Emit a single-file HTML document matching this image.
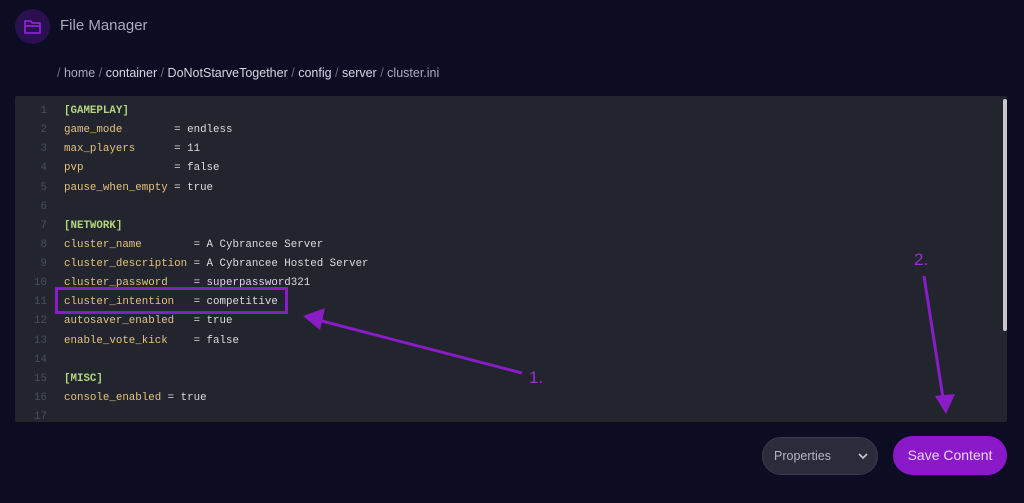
<!DOCTYPE html>
<html><head><style>
body{margin:0;width:1024px;height:503px;background:#0c0c22;font-family:"Liberation Sans",sans-serif;overflow:hidden;position:relative}
.ic{position:absolute;left:15px;top:9px;width:35px;height:35px;border-radius:50%;background:#2a1050}
.title{position:absolute;left:60px;top:17px;font-size:15px;color:#a8a8c2}
.bc{position:absolute;left:57px;top:66px;font-size:12.5px;color:#d6d6e2}
.bc .s{color:#6c6c85}.bc .l{color:#a8a8c0}
.ed{position:absolute;left:15px;top:96px;width:992px;height:326px;background:#22252d;border-radius:2px;overflow:hidden}
.code{position:absolute;top:0;left:0;font-family:"Liberation Mono",monospace;font-size:10.8px;line-height:19.13px;padding-top:3px}
.ln{position:absolute;left:0;width:32px;text-align:right;color:#4a4e59}
.tx{position:absolute;left:49px;white-space:pre;color:#dcdce0}
.k{color:#e6c27e}.g{color:#b5d67e;font-weight:bold}
.sb{position:absolute;left:988px;top:3px;width:4px;height:232px;background:#c8c8cc;border-radius:2px}
.prop{position:absolute;left:762px;top:437px;width:116px;height:38px;border-radius:19px;background:#2b2b3c;border:1px solid #3a3a4e;box-sizing:border-box;color:#b4b4c4;font-size:12.5px;line-height:36px;padding-left:11px}
.save{position:absolute;left:893px;top:436px;width:114px;height:39px;border-radius:20px;background:#8c19c9;color:#e9d7f5;font-size:14px;line-height:39px;text-align:center}
.lab{position:absolute;color:#9b2fd6;font-size:17px}
</style></head><body>
<div class="ic"><svg width="35" height="35" viewBox="0 0 35 35"><path d="M10 12h5.5l2 2h7.5v10H10z" fill="none" stroke="#8a22d0" stroke-width="1.8" stroke-linejoin="round"/><path d="M10 17h15" stroke="#8a22d0" stroke-width="1.8"/></svg></div>
<div class="title">File Manager</div>
<div class="bc"><span class="s">/</span> <span class="l">home</span> <span class="s">/</span> container <span class="s">/</span> DoNotStarveTogether <span class="s">/</span> config <span class="s">/</span> server <span class="s">/</span> <span class="l">cluster.ini</span></div>
<div class="ed">
<div class="code">
<div style="position:relative;height:330px">
<div class="ln" style="top:3px">1<br>2<br>3<br>4<br>5<br>6<br>7<br>8<br>9<br>10<br>11<br>12<br>13<br>14<br>15<br>16<br>17</div>
<div class="tx" style="top:3px"><span class="g">[GAMEPLAY]</span>
<span class="k">game_mode</span>        = endless
<span class="k">max_players</span>      = 11
<span class="k">pvp</span>              = false
<span class="k">pause_when_empty</span> = true

<span class="g">[NETWORK]</span>
<span class="k">cluster_name</span>        = A Cybrancee Server
<span class="k">cluster_description</span> = A Cybrancee Hosted Server
<span class="k">cluster_password</span>    = superpassword321
<span class="k">cluster_intention</span>   = competitive
<span class="k">autosaver_enabled</span>   = true
<span class="k">enable_vote_kick</span>    = false

<span class="g">[MISC]</span>
<span class="k">console_enabled</span> = true
</div></div></div>
<div class="sb"></div>
</div>
<svg style="position:absolute;left:0;top:0" width="1024" height="503">
<rect x="56.5" y="288.5" width="230" height="24" fill="none" stroke="#8a1cc8" stroke-width="3"/>
<line x1="522" y1="373" x2="318" y2="320" stroke="#8a1cc8" stroke-width="3"/>
<polygon points="303,316 325,308 320,330" fill="#8a1cc8"/>
<line x1="924" y1="276" x2="943" y2="398" stroke="#8a1cc8" stroke-width="3"/>
<polygon points="946,414 935,396 955,394" fill="#8a1cc8"/>
</svg>
<div class="lab" style="left:529px;top:368px">1.</div>
<div class="lab" style="left:914px;top:250px">2.</div>
<div class="prop">Properties<svg style="position:absolute;left:95px;top:15px" width="10" height="7"><path d="M1 1l4 4 4-4" fill="none" stroke="#c8c8d4" stroke-width="1.6"/></svg></div>
<div class="save">Save Content</div>
</body></html>
